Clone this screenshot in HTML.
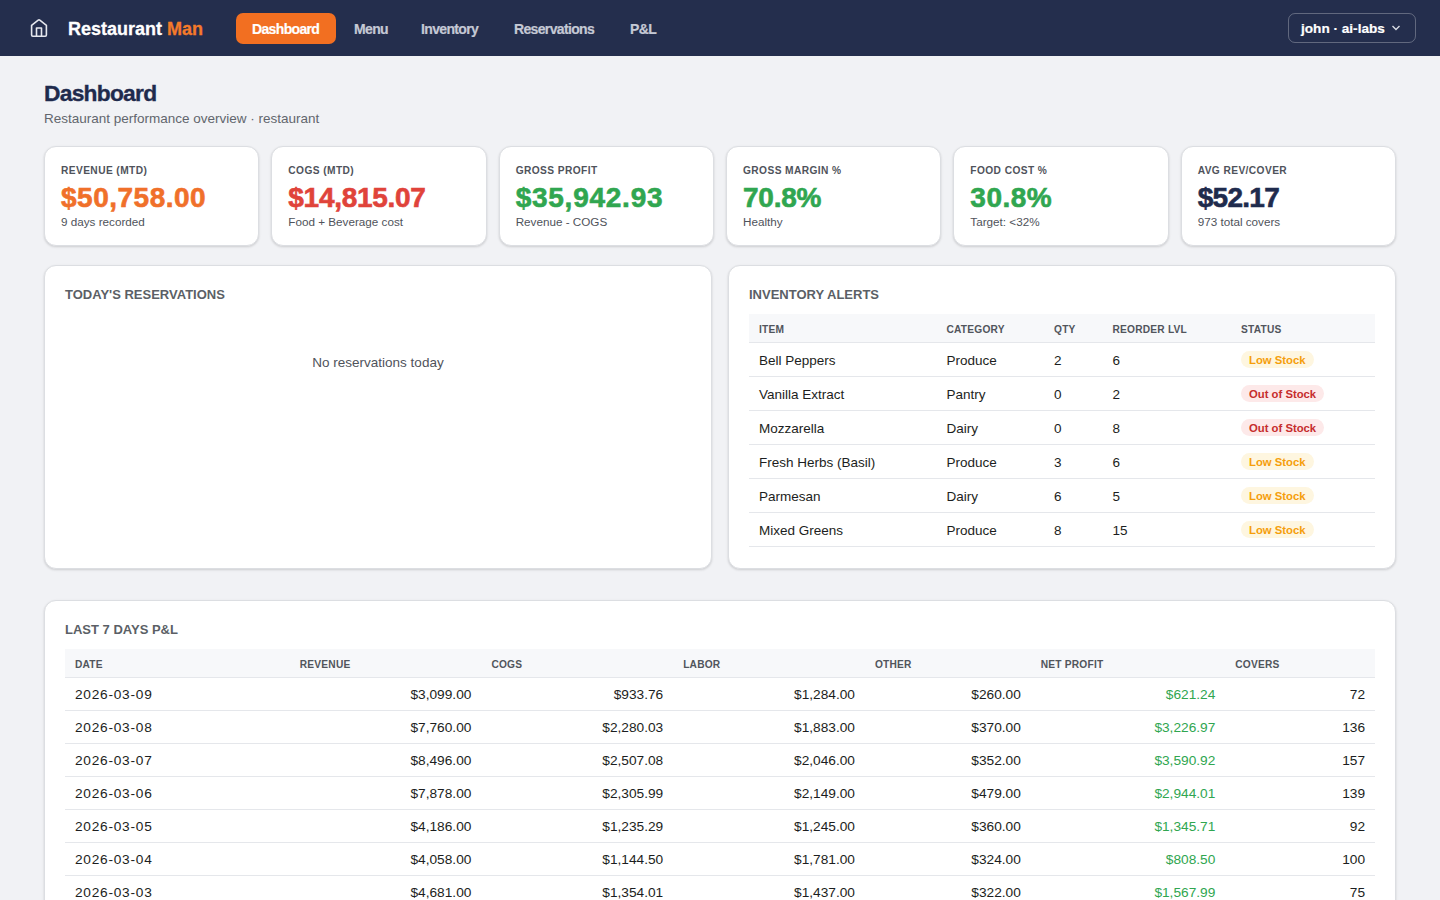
<!DOCTYPE html>
<html><head><meta charset="utf-8">
<style>
*{box-sizing:border-box;margin:0;padding:0}
html,body{width:1440px;height:900px;overflow:hidden}
body{background:#f1f2f5;font-family:"Liberation Sans",sans-serif;color:#1f2328;position:relative}
.abs{position:absolute;white-space:nowrap;line-height:1}
#nav{position:absolute;left:0;top:0;width:1440px;height:56px;background:#242e4d}
.brand{left:68px;top:20px;font-size:18px;font-weight:700;color:#fff;-webkit-text-stroke:.3px currentColor}
.brand span{color:#f47a2a}
.pill{position:absolute;left:236px;top:13px;width:100px;height:31px;border-radius:7px;background:#f26f21}
.nl{font-size:14px;letter-spacing:-.65px;font-weight:700;color:#c5c9d5;top:21.5px;-webkit-text-stroke:.2px currentColor}
.user{position:absolute;left:1288px;top:13px;width:128px;height:30px;border:1px solid rgba(255,255,255,.28);border-radius:7px}
.h1{left:44px;top:82px;font-size:22.8px;letter-spacing:-.75px;-webkit-text-stroke:.35px currentColor;font-weight:700;color:#1f2b4d}
.sub{left:44px;top:112px;font-size:13.5px;color:#62666d}
.card{position:absolute;background:#fff;border:1px solid #dcdee2;border-radius:12px;box-shadow:0 1px 3px rgba(0,0,0,.1),0 1px 2px rgba(0,0,0,.06)}
.kl{position:absolute;left:16px;top:18.5px;font-size:10.2px;font-weight:700;letter-spacing:.04em;color:#4f535b;line-height:1;white-space:nowrap}
.kv{position:absolute;left:16px;top:37px;font-size:28px;letter-spacing:.5px;-webkit-text-stroke:.6px currentColor;font-weight:700;line-height:1;white-space:nowrap}
.ks{position:absolute;left:16px;top:69px;font-size:11.7px;color:#4f535b;line-height:1;white-space:nowrap}
.st{position:absolute;left:20px;top:22px;font-size:13px;font-weight:700;color:#5b5f66;line-height:1;white-space:nowrap}
table{border-collapse:collapse;position:absolute;table-layout:fixed}
th{background:#f7f8fa;font-size:10.2px;font-weight:700;letter-spacing:.02em;color:#51555c;text-align:left;padding:0 10px;border-bottom:1px solid #e5e7eb;white-space:nowrap;padding-top:3px}
td{font-size:13.7px;padding:1.5px 10px 0;border-bottom:1px solid #e5e7eb;white-space:nowrap;color:#1c1e21}
.badge{display:inline-block;height:17px;line-height:18px;padding:0 8px;border-radius:9px;font-size:11.3px;font-weight:700;vertical-align:middle;position:relative;top:-1px}
.low{background:#fef6e0;color:#f59e0b}
.out{background:#fde9e9;color:#c62d2d}
.r{text-align:right}
.dt{letter-spacing:.75px}
.hr th{height:28px}
.ir td{height:34px;padding-top:3px;font-size:13.5px}
.pr td{height:33px}
.g{color:#30a650}
</style></head><body>
<div id="nav">
  <svg class="abs" style="left:24px;top:12px" width="30" height="30" viewBox="0 0 30 30" fill="none" stroke="#e6e8ee" stroke-width="1.6" stroke-linecap="round" stroke-linejoin="round"><path d="M7.6 13.3 L14.2 8.2 Q15 7.6 15.8 8.2 L22.4 13.3 V23 Q22.4 24.2 21.2 24.2 H8.8 Q7.6 24.2 7.6 23 Z"/><path d="M12.5 24.2 V16 H17.5 V24.2"/></svg>
  <div class="abs brand">Restaurant <span>Man</span></div>
  <div class="pill"></div>
  <div class="abs nl" style="left:252px;color:#fff">Dashboard</div>
  <div class="abs nl" style="left:354px">Menu</div>
  <div class="abs nl" style="left:421px">Inventory</div>
  <div class="abs nl" style="left:514px">Reservations</div>
  <div class="abs nl" style="left:630px">P&amp;L</div>
  <div class="user"></div>
  <div class="abs nl" style="left:1301px;color:#fff;font-size:13.6px;letter-spacing:0;top:22px">john · ai-labs</div>
  <svg class="abs" style="left:1391px;top:24px" width="10" height="8" viewBox="0 0 10 8" fill="none" stroke="#d8dbe3" stroke-width="1.4"><path d="M1.5 2 L5 5.5 L8.5 2"/></svg>
</div>
<div class="abs h1">Dashboard</div>
<div class="abs sub">Restaurant performance overview · restaurant</div>

<div class="card" style="left:44px;top:146px;width:215.33px;height:100px"><div class="kl">REVENUE (MTD)</div><div class="kv" style="color:#f0702a">$50,758.00</div><div class="ks">9 days recorded</div></div>
<div class="card" style="left:271.33px;top:146px;width:215.33px;height:100px"><div class="kl">COGS (MTD)</div><div class="kv" style="color:#e0433a;letter-spacing:-.28px">$14,815.07</div><div class="ks">Food + Beverage cost</div></div>
<div class="card" style="left:498.67px;top:146px;width:215.33px;height:100px"><div class="kl">GROSS PROFIT</div><div class="kv" style="color:#30a650;letter-spacing:.75px">$35,942.93</div><div class="ks">Revenue - COGS</div></div>
<div class="card" style="left:726px;top:146px;width:215.33px;height:100px"><div class="kl">GROSS MARGIN %</div><div class="kv" style="color:#30a650;letter-spacing:-.25px">70.8%</div><div class="ks">Healthy</div></div>
<div class="card" style="left:953.33px;top:146px;width:215.33px;height:100px"><div class="kl">FOOD COST %</div><div class="kv" style="color:#30a650">30.8%</div><div class="ks">Target: &lt;32%</div></div>
<div class="card" style="left:1180.67px;top:146px;width:215.33px;height:100px"><div class="kl">AVG REV/COVER</div><div class="kv" style="color:#1f2b4d;letter-spacing:-.7px">$52.17</div><div class="ks">973 total covers</div></div>

<div class="card" style="left:44px;top:265px;width:668px;height:304px">
  <div class="st">TODAY'S RESERVATIONS</div>
  <div class="abs" style="left:0;width:666px;text-align:center;top:90px;font-size:13.5px;color:#4f535b">No reservations today</div>
</div>

<div class="card" style="left:728px;top:265px;width:668px;height:304px">
  <div class="st">INVENTORY ALERTS</div>
<table class="inv" style="left:20px;top:48px;width:626px">
<colgroup><col style="width:187.5px"><col style="width:107.5px"><col style="width:58.5px"><col style="width:128.5px"><col style="width:144px"></colgroup>
<tr class="hr"><th>ITEM</th><th>CATEGORY</th><th>QTY</th><th>REORDER LVL</th><th>STATUS</th></tr>
<tr class="ir"><td>Bell Peppers</td><td>Produce</td><td>2</td><td>6</td><td><span class="badge low">Low Stock</span></td></tr>
<tr class="ir"><td>Vanilla Extract</td><td>Pantry</td><td>0</td><td>2</td><td><span class="badge out">Out of Stock</span></td></tr>
<tr class="ir"><td>Mozzarella</td><td>Dairy</td><td>0</td><td>8</td><td><span class="badge out">Out of Stock</span></td></tr>
<tr class="ir"><td>Fresh Herbs (Basil)</td><td>Produce</td><td>3</td><td>6</td><td><span class="badge low">Low Stock</span></td></tr>
<tr class="ir"><td>Parmesan</td><td>Dairy</td><td>6</td><td>5</td><td><span class="badge low">Low Stock</span></td></tr>
<tr class="ir"><td>Mixed Greens</td><td>Produce</td><td>8</td><td>15</td><td><span class="badge low">Low Stock</span></td></tr>
</table>
</div>

<div class="card" style="left:44px;top:600px;width:1352px;height:340px">
  <div class="st">LAST 7 DAYS P&amp;L</div>
<table class="pl" style="left:20px;top:48px;width:1310px">
<colgroup><col style="width:224.8px"><col style="width:191.6px"><col style="width:191.8px"><col style="width:191.8px"><col style="width:165.8px"><col style="width:194.5px"><col style="width:149.7px"></colgroup>
<tr class="hr"><th>DATE</th><th>REVENUE</th><th>COGS</th><th>LABOR</th><th>OTHER</th><th>NET PROFIT</th><th>COVERS</th></tr>
<tr class="pr"><td class="dt">2026-03-09</td><td class="r">$3,099.00</td><td class="r">$933.76</td><td class="r">$1,284.00</td><td class="r">$260.00</td><td class="r g">$621.24</td><td class="r">72</td></tr>
<tr class="pr"><td class="dt">2026-03-08</td><td class="r">$7,760.00</td><td class="r">$2,280.03</td><td class="r">$1,883.00</td><td class="r">$370.00</td><td class="r g">$3,226.97</td><td class="r">136</td></tr>
<tr class="pr"><td class="dt">2026-03-07</td><td class="r">$8,496.00</td><td class="r">$2,507.08</td><td class="r">$2,046.00</td><td class="r">$352.00</td><td class="r g">$3,590.92</td><td class="r">157</td></tr>
<tr class="pr"><td class="dt">2026-03-06</td><td class="r">$7,878.00</td><td class="r">$2,305.99</td><td class="r">$2,149.00</td><td class="r">$479.00</td><td class="r g">$2,944.01</td><td class="r">139</td></tr>
<tr class="pr"><td class="dt">2026-03-05</td><td class="r">$4,186.00</td><td class="r">$1,235.29</td><td class="r">$1,245.00</td><td class="r">$360.00</td><td class="r g">$1,345.71</td><td class="r">92</td></tr>
<tr class="pr"><td class="dt">2026-03-04</td><td class="r">$4,058.00</td><td class="r">$1,144.50</td><td class="r">$1,781.00</td><td class="r">$324.00</td><td class="r g">$808.50</td><td class="r">100</td></tr>
<tr class="pr"><td class="dt">2026-03-03</td><td class="r">$4,681.00</td><td class="r">$1,354.01</td><td class="r">$1,437.00</td><td class="r">$322.00</td><td class="r g">$1,567.99</td><td class="r">75</td></tr>
</table>
</div>
</body></html>
